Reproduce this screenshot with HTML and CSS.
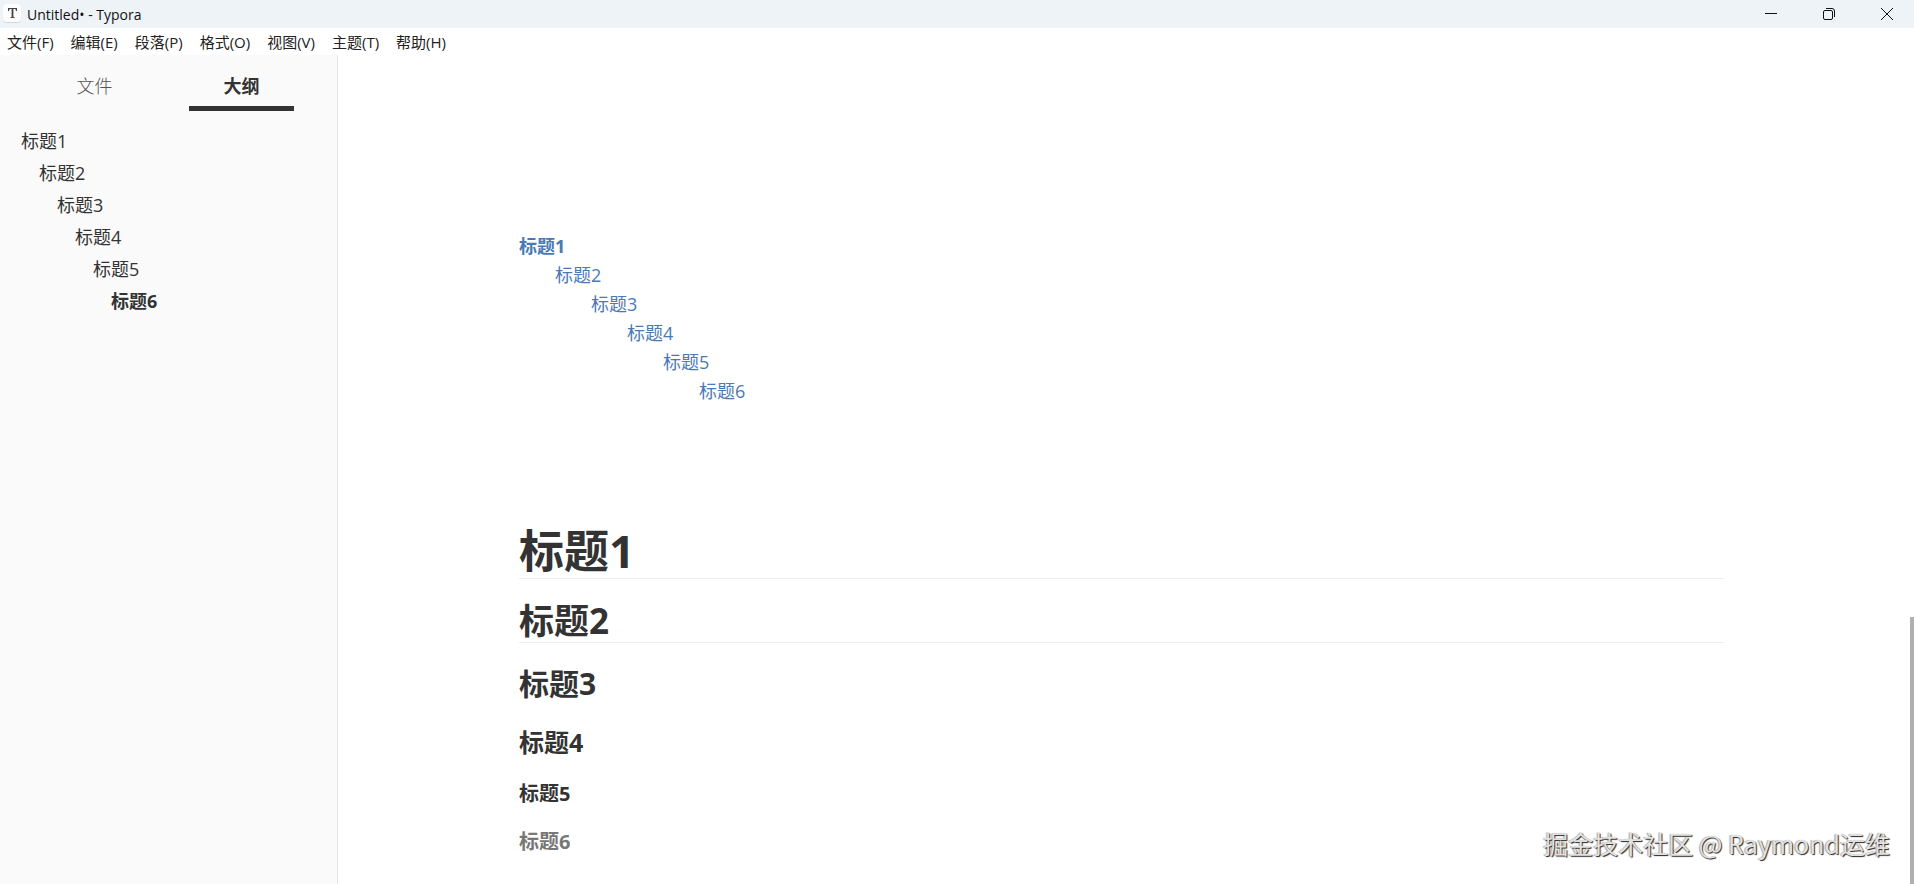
FILE: index.html
```
<!DOCTYPE html>
<html lang="zh-CN">
<head>
    <meta charset="UTF-8">
    <meta name="viewport" content="width=device-width, initial-scale=1.0">
    <title>Untitled• - Typora</title>
    <link rel="stylesheet" href="styles.css">
</head>
<body>
    <header class="titlebar">
        <svg class="app-icon" viewBox="0 0 20 20" width="20" height="20">
            <rect x="1" y="1" width="18" height="18" rx="4" fill="#d3d6d9"/>
            <rect x="1" y="0" width="18" height="18" rx="4" fill="#fdfdfd"/>
            <path d="M6 4h9v3h-1l-.6-1.9h-2v8l1.4.3v.7H8.2v-.7l1.4-.3v-8h-2L7 7H6z" fill="#444"/>
        </svg>
        <span class="title">Untitled• - Typora</span>
        <div class="window-buttons">
            <button type="button" aria-label="最小化">
                <svg viewBox="0 0 14 14" width="14" height="14"><path d="M1 6.500h12"/></svg>
            </button>
            <button type="button" aria-label="还原">
                <svg viewBox="0 0 14 14" width="14" height="14"><rect x="1.500" y="3.500" width="9" height="9" rx="1.500"/><path d="M4 1.500h6q2.500 0 2.500 2.500v6"/></svg>
            </button>
            <button type="button" aria-label="关闭">
                <svg viewBox="0 0 14 14" width="14" height="14"><path d="M1 1l12 12M13 1l-12 12"/></svg>
            </button>
        </div>
    </header>

    <nav class="menubar">
        <button type="button">文件(F)</button>
        <button type="button">编辑(E)</button>
        <button type="button">段落(P)</button>
        <button type="button">格式(O)</button>
        <button type="button">视图(V)</button>
        <button type="button">主题(T)</button>
        <button type="button">帮助(H)</button>
    </nav>

    <div class="workspace">
        <aside class="sidebar">
            <div class="tabs">
                <button type="button">文件</button>
                <button type="button" class="active">大纲</button>
            </div>
            <ul class="outline">
                <li><a href="#h1">标题1</a>
                    <ul><li><a href="#h2">标题2</a>
                        <ul><li><a href="#h3">标题3</a>
                            <ul><li><a href="#h4">标题4</a>
                                <ul><li><a href="#h5">标题5</a>
                                    <ul><li><a href="#h6" class="active">标题6</a></li></ul>
                                </li></ul>
                            </li></ul>
                        </li></ul>
                    </li></ul>
                </li>
            </ul>
        </aside>

        <main class="editor">
            <ul class="toc">
                <li><a href="#h1" class="toc-top">标题1</a>
                    <ul><li><a href="#h2">标题2</a>
                        <ul><li><a href="#h3">标题3</a>
                            <ul><li><a href="#h4">标题4</a>
                                <ul><li><a href="#h5">标题5</a>
                                    <ul><li><a href="#h6">标题6</a></li></ul>
                                </li></ul>
                            </li></ul>
                        </li></ul>
                    </li></ul>
                </li>
            </ul>

            <h1 id="h1">标题1</h1>
            <h2 id="h2">标题2</h2>
            <h3 id="h3">标题3</h3>
            <h4 id="h4">标题4</h4>
            <h5 id="h5">标题5</h5>
            <h6 id="h6">标题6</h6>
        </main>
        <div class="scroll-thumb"></div>
    </div>

    <div class="watermark">掘金技术社区 @ Raymond运维</div>
</body>
</html>
```
FILE: styles.css
```
* {
    box-sizing: border-box;
}

body {
    display: flex;
    flex-direction: column;
    height: 100vh;
    margin: 0;
    overflow: hidden;
    background: #fff;
    color: #333;
    font-family: "Open Sans", "Noto Sans CJK SC", sans-serif;
}

button {
    padding: 0;
    border: none;
    background: none;
    color: inherit;
    font: inherit;
}

a {
    color: inherit;
    text-decoration: none;
}

ul {
    margin: 0;
    padding: 0;
    list-style: none;
}

/* Window title */
.titlebar {
    display: flex;
    align-items: center;
    flex: none;
    height: 28px;
    padding-left: 2px;
    background: #eef3f8;
    color: #111;
    font-size: 14px;
}

.title {
    margin-left: 5px;
}

.window-buttons {
    display: flex;
    gap: 4px;
    margin-left: auto;
}

.window-buttons button {
    display: flex;
    align-items: center;
    justify-content: center;
    width: 54px;
    height: 28px;
}

.window-buttons svg {
    fill: none;
    stroke: #111;
}

/* Menu */
.menubar {
    display: flex;
    flex: none;
    gap: 17px;
    height: 27px;
    padding-left: 7px;
    color: #222;
    font-size: 15px;
    line-height: 28px;
}

.workspace {
    position: relative;
    display: flex;
    flex: 1;
    min-height: 0;
}

/* Sidebar */
.sidebar {
    flex: none;
    width: 338px;
    background: #fafafa;
    border-right: 1px solid #e4e4e4;
    font-size: 18px;
}

.tabs {
    display: flex;
    padding: 8px 22px 0 21px;
}

.tabs button {
    flex: 1;
    height: 48px;
    margin: 0 21px;
    padding-top: 3px;
    border-bottom: 5px solid transparent;
    color: #555;
    font-weight: 300;
    line-height: 30px;
}

.tabs .active {
    border-color: #333;
    color: #333;
    font-weight: bold;
}

.outline {
    padding: 14px 0 0 21px;
    line-height: 32px;
}

.outline a,
.toc a {
    display: block;
}

.outline ul {
    padding-left: 18px;
}

.outline .active {
    font-weight: bold;
}

/* Document */
.editor {
    flex: 1;
    padding: 177px 190px 0 181px;
    overflow: hidden;
}

.toc {
    margin-bottom: 118px;
    color: #4a7ab5;
    font-size: 18px;
    line-height: 29px;
}

.toc ul {
    padding-left: 36px;
}

.toc .toc-top {
    font-weight: bold;
}

h1, h2, h3, h4, h5, h6 {
    margin: 0 0 20px;
    font-weight: bold;
}

h1 {
    border-bottom: 1px solid #eee;
    font-size: 45px;
    line-height: 54px;
}

h2 {
    border-bottom: 1px solid #eee;
    font-size: 35px;
    line-height: 43px;
}

h3 {
    font-size: 30px;
    line-height: 42px;
}

h4 {
    font-size: 25px;
    line-height: 35px;
}

h5, h6 {
    font-size: 20px;
    line-height: 28px;
}

h6 {
    color: #777;
}

.scroll-thumb {
    position: absolute;
    right: 0;
    bottom: 0;
    width: 4px;
    height: 267px;
    background: #b0b0b0;
}

.watermark {
    position: absolute;
    right: 24px;
    bottom: 22px;
    color: #e2e2e2;
    font-family: "Noto Sans CJK SC", sans-serif;
    font-size: 25px;
    line-height: 38px;
    text-shadow: 1px 1px 1px #222, -1px 0 1px #aaa;
}
```
